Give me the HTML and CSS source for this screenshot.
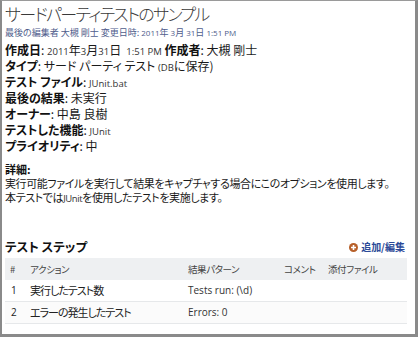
FILE: index.html
```html
<!DOCTYPE html>
<html lang="ja">
<head>
<meta charset="utf-8">
<link rel="stylesheet" href="styles.css">
</head>
<body>
<div class="frame">
  <h1 class="title">サードパーティテストのサンプル</h1>
  <div class="meta">最後の編集者 大槻 剛士 変更日時: <span class="lat">2011</span>年 <span class="lat">3</span>月 <span class="lat">31</span>日 <span class="lat">1:51 PM</span></div>

  <div class="info">
    <div class="row"><b>作成日</b>: <span class="lat">2011</span>年<span class="lat">3</span>月<span class="lat">31</span>日 <span class="lat">&nbsp;1:51 PM</span> <b>作成者</b>: 大槻 剛士</div>
    <div class="row"><b>タイプ</b>: サード パーティ テスト <span class="lat">(DB</span>に保存)</div>
    <div class="row"><b>テスト ファイル</b>: <span class="lat">JUnit.bat</span></div>
    <div class="row"><b>最後の結果</b>: 未実行</div>
    <div class="row"><b>オーナー</b>: 中島 良樹</div>
    <div class="row"><b>テストした機能</b>: <span class="lat">JUnit</span></div>
    <div class="row"><b>プライオリティ</b>: 中</div>
  </div>

  <div class="detail">
    <div class="drow"><b>詳細:</b></div>
    <div class="drow">実行可能ファイルを実行して結果をキャプチャする場合にこのオプションを使用します。</div>
    <div class="drow">本テストでは<span class="lat">JUnit</span>を使用したテストを実施します。</div>
  </div>

  <div class="steps-head">
    <h2>テスト ステップ</h2>
    <a class="edit"><span class="plus"><svg width="9" height="9" viewBox="0 0 9 9"><circle cx="4.5" cy="4.5" r="4.5" fill="#b7602a"/><path d="M4.5 2v5M2 4.5h5" stroke="#fff" stroke-width="1.6"/></svg></span>追加/編集</a>
  </div>

  <table class="steps">
    <colgroup><col class="c1"><col class="c2"><col class="c3"><col class="c4"><col class="c5"></colgroup>
    <thead>
      <tr><th>#</th><th>アクション</th><th>結果パターン</th><th>コメント</th><th>添付ファイル</th></tr>
    </thead>
    <tbody>
      <tr><td class="num">1</td><td class="act">実行したテスト数</td><td class="lat2">Tests run: (\d)</td><td></td><td></td></tr>
      <tr class="alt"><td class="num">2</td><td class="act">エラーの発生したテスト</td><td class="lat2">Errors: 0</td><td></td><td></td></tr>
    </tbody>
  </table>
</div>
</body>
</html>
```

FILE: styles.css
```css
html, body {
  margin: 0;
  padding: 0;
  background: #fff;
}
body {
  width: 418px;
  height: 337px;
  overflow: hidden;
  font-family: "Noto Sans CJK JP", "Noto Sans", sans-serif;
  font-feature-settings: "palt";
  color: #1a1a1a;
}
.frame {
  box-sizing: border-box;
  width: 418px;
  height: 337px;
  overflow: hidden;
  border-top: 1px solid #9a9a9a;
  border-left: 2px solid #8a8a8a;
  border-right: 3px solid #8a8a8a;
  border-bottom: 3px solid #8a8a8a;
  padding: 0 8px 0 3px;
}
.title {
  margin: 0;
  height: 25px;
  font-size: 17px;
  font-weight: 300;
  line-height: 25px;
  color: #3a3a3a;
  letter-spacing: -1.7px;
}
.meta {
  height: 13px;
  font-size: 9px;
  line-height: 13px;
  color: #4f5d8c;
  white-space: nowrap;
}
.meta .lat {
  font-family: "Open Sans", "Noto Sans", sans-serif;
  font-size: 8px;
  color: #4f5d8c;
  line-height: 1;
}
.info {
  margin-top: 3px;
}
.row {
  height: 16px;
  font-size: 12px;
  line-height: 16px;
  white-space: nowrap;
}
.row b, .drow b {
  font-weight: 700;
  color: #111;
}
.lat {
  font-family: "Open Sans", "Noto Sans", sans-serif;
  font-size: 9.5px;
  color: #333;
  line-height: 1;
}
.detail {
  margin-top: 8px;
}
.drow {
  height: 14px;
  font-size: 11px;
  line-height: 14px;
  letter-spacing: -0.4px;
  white-space: nowrap;
}
.drow b {
  letter-spacing: 0;
}
.steps-head {
  display: flex;
  justify-content: space-between;
  align-items: center;
  height: 16px;
  margin-top: 35px;
  padding-right: 2px;
}
.steps-head h2 {
  margin: 0;
  font-size: 12.5px;
  font-weight: 700;
  line-height: 16px;
  color: #111;
}
.edit {
  display: flex;
  align-items: center;
  gap: 3px;
  font-size: 10px;
  font-weight: 700;
  color: #2c4a98;
  line-height: 14px;
}
.plus { display: flex; }
.steps {
  margin-top: 3px;
  width: 402px;
  border-collapse: collapse;
  table-layout: fixed;
}
.c1 { width: 20px; }
.c2 { width: 158px; }
.c3 { width: 96px; }
.c4 { width: 44px; }
.c5 { width: 84px; }
.steps th {
  background: #eef0f2;
  color: #444;
  font-weight: 400;
  text-align: left;
  height: 22px;
  padding: 0 0 0 5px;
  font-size: 9.5px;
  letter-spacing: -0.4px;
  line-height: 22px;
  white-space: nowrap;
}
.steps td {
  height: 21px;
  padding: 0 0 0 5px;
  border-bottom: 1px solid #e6e8ea;
  font-size: 11px;
  line-height: 21px;
  color: #222;
  white-space: nowrap;
}
.steps td.act {
  letter-spacing: -1px;
}
.steps td.num {
  font-family: "Open Sans", sans-serif;
  font-size: 10px;
  padding-left: 6px;
}
.steps td.lat2 {
  font-family: "Open Sans", sans-serif;
  font-size: 10px;
  color: #333;
}
.steps tr.alt td {
  background: #fbfbfb;
}
```
